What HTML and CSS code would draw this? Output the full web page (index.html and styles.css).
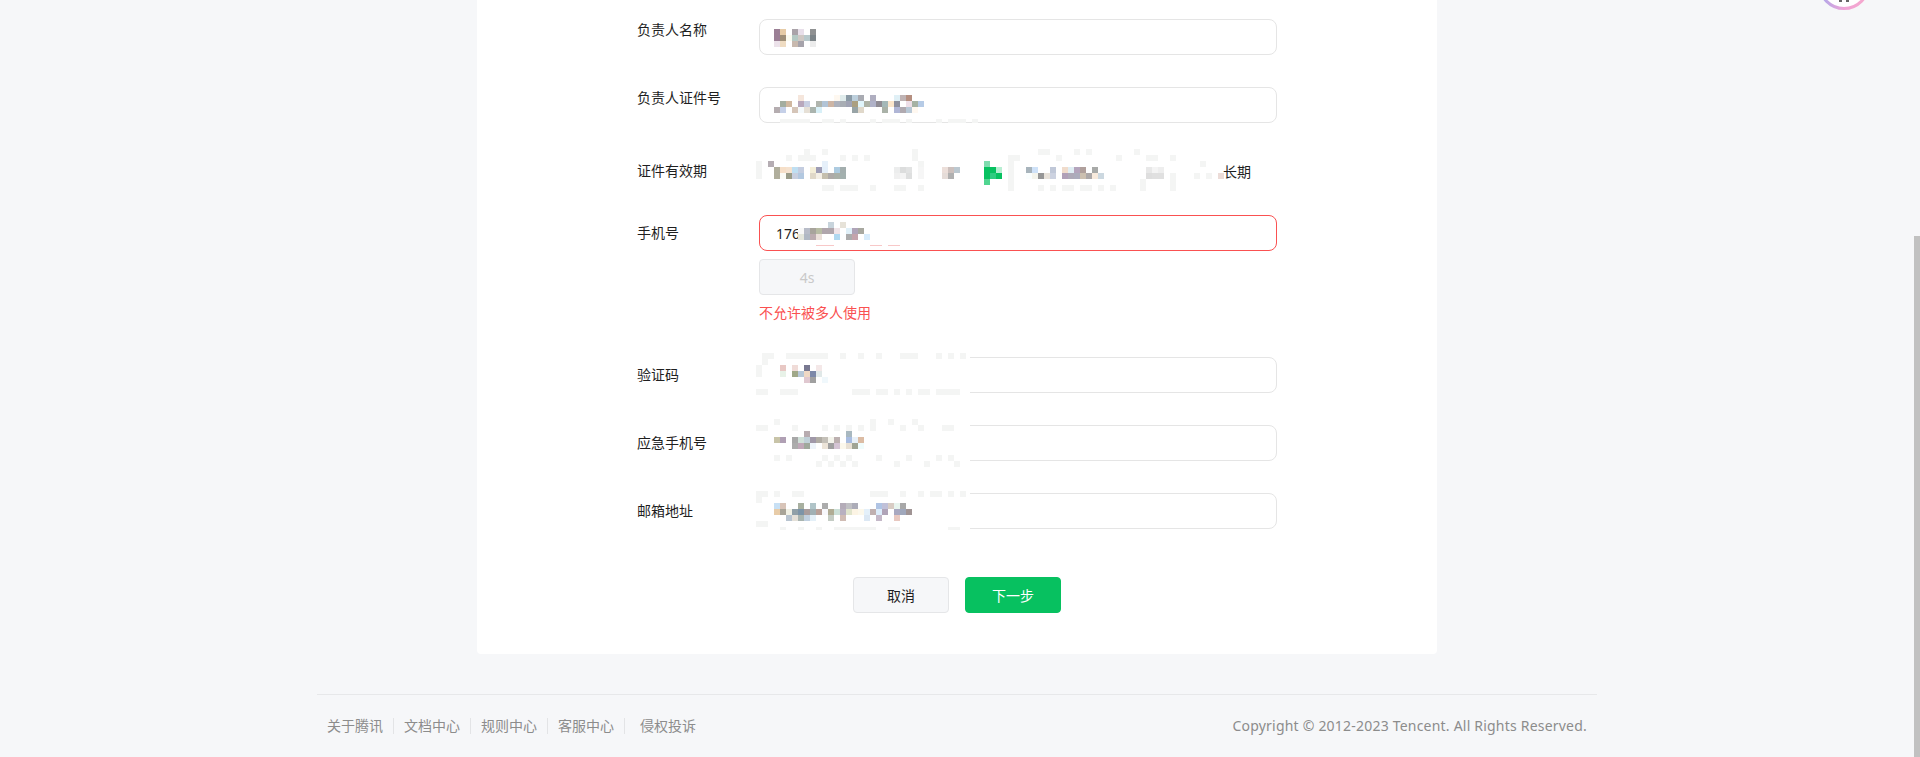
FILE: index.html
```html
<!DOCTYPE html>
<html lang="zh-CN">

<head>
    <meta charset="UTF-8">
    <title>负责人信息</title>
    <link rel="stylesheet" href="styles.css">
</head>

<body>
    <div class="page">
        <div class="card">
            <form class="form">
                <div class="row">
                    <label class="label label-top">负责人名称</label>
                    <div class="field"><input class="input" type="text" readonly></div>
                </div>
                <div class="row">
                    <label class="label label-top">负责人证件号</label>
                    <div class="field"><input class="input" type="text" readonly></div>
                </div>
                <div class="row row-date">
                    <label class="label label-date">证件有效期</label>
                    <div class="field date-value">长期</div>
                </div>
                <div class="row">
                    <label class="label">手机号</label>
                    <div class="field">
                        <input class="input input-error" type="text" value="176" readonly>
                        <button class="btn btn-code" type="button" disabled>4s</button>
                        <p class="error">不允许被多人使用</p>
                    </div>
                </div>
                <div class="row">
                    <label class="label">验证码</label>
                    <div class="field"><input class="input" type="text" readonly></div>
                </div>
                <div class="row">
                    <label class="label">应急手机号</label>
                    <div class="field"><input class="input" type="text" readonly></div>
                </div>
                <div class="row">
                    <label class="label">邮箱地址</label>
                    <div class="field"><input class="input" type="text" readonly></div>
                </div>
            </form>
            <div class="actions">
                <button class="btn" type="button">取消</button>
                <button class="btn btn-primary" type="button">下一步</button>
            </div>

            <!-- pixelated (redacted) values, one group per field, units are mosaic cells -->
            <svg class="mosaic" viewBox="477 0 960 654" aria-hidden="true">
                <path fill="#fff" d="M756 352h214v42H756zM756 420h214v45H756zM756 488h214v42H756z"/>

                <g transform="translate(774 29) scale(6)">
                    <rect x="0" y="0" fill="#9b7f95"/><rect x="1" y="0" fill="#e6cba6"/><rect x="3" y="0" fill="#aaa3a9"/><rect x="4" y="0" fill="#e8dfea"/><rect x="6" y="0" fill="#8f9192"/>
                    <rect x="0" y="1" fill="#9b7f95"/><rect x="1" y="1" fill="#9e8e77"/><rect x="2" y="1" fill="#fbfbef"/><rect x="3" y="1" fill="#b5c9c4"/><rect x="4" y="1" fill="#cfc8c4"/><rect x="5" y="1" fill="#b8c9cc"/><rect x="6" y="1" fill="#7c8488"/>
                    <rect x="0" y="2" fill="#ece2ea"/><rect x="1" y="2" fill="#efdcc2"/><rect x="3" y="2" fill="#c8b9ae"/><rect x="4" y="2" fill="#a6a3ab"/><rect x="6" y="2" fill="#ececec"/>
                </g>

                <g transform="translate(774 95) scale(6)">
                    <rect x="4" y="0" fill="#f5e6dc"/><rect x="10" y="0" fill="#fef8f0"/><rect x="11" y="0" fill="#e0ecec"/><rect x="12" y="0" fill="#8b9ba6"/><rect x="13" y="0" fill="#bccfdc"/><rect x="14" y="0" fill="#a9abb2"/><rect x="16" y="0" fill="#afaec0"/><rect x="20" y="0" fill="#e0f0f6"/><rect x="21" y="0" fill="#bfb3b4"/><rect x="22" y="0" fill="#b58f80"/>
                    <rect x="1" y="1" fill="#a3ada0"/><rect x="2" y="1" fill="#d0b8a0"/><rect x="4" y="1" fill="#b8a8bc"/><rect x="5" y="1" fill="#c8cfe2"/><rect x="7" y="1" fill="#b0b5ae"/><rect x="8" y="1" fill="#b2c4d6"/><rect x="9" y="1" fill="#cdb5a5"/><rect x="10" y="1" fill="#adb1bc"/><rect x="11" y="1" fill="#a8adb4"/><rect x="12" y="1" fill="#a0a3b4"/><rect x="13" y="1" fill="#ab9f80"/><rect x="14" y="1" fill="#e0f4fa"/><rect x="15" y="1" fill="#adb2a6"/><rect x="16" y="1" fill="#b0b2c8"/><rect x="17" y="1" fill="#908c94"/><rect x="18" y="1" fill="#a4b8b8"/><rect x="19" y="1" fill="#fbe6cc"/><rect x="20" y="1" fill="#8e909e"/><rect x="22" y="1" fill="#eedfe8"/><rect x="23" y="1" fill="#a6b2a4"/><rect x="24" y="1" fill="#b6cbe6"/>
                    <rect x="0" y="2" fill="#b5adb0"/><rect x="1" y="2" fill="#c5d0e8"/><rect x="3" y="2" fill="#d5c5b8"/><rect x="4" y="2" fill="#f5fafc"/><rect x="5" y="2" fill="#e6e0d6"/><rect x="6" y="2" fill="#aab4ae"/><rect x="7" y="2" fill="#d8f0f8"/><rect x="13" y="2" fill="#98a4a6"/><rect x="14" y="2" fill="#e0d8ca"/><rect x="18" y="2" fill="#aab2a8"/><rect x="20" y="2" fill="#b0b6d6"/><rect x="21" y="2" fill="#b0aab0"/><rect x="22" y="2" fill="#b8c8d6"/><rect x="23" y="2" fill="#fff8f0"/>
                </g>
                <path class="pale" d="M780 119h30v4h-30zM822 119h12v4h-12zM840 119h6v4h-6zM870 119h6v4h-6zM882 119h18v4h-18zM906 119h6v4h-6zM936 119h6v4h-6zM948 119h18v4h-18zM972 119h6v4h-6z"/>

                <g transform="translate(774 149) scale(6)">
                    <rect class="p" x="5" y="0"/><rect class="p" x="8" y="0"/><rect class="p" x="23" y="0"/><rect class="p" x="44" y="0"/><rect class="p" x="45" y="0"/><rect class="p" x="50" y="0"/><rect class="p" x="52" y="0"/><rect class="p" x="60" y="0"/>
                    <rect class="p" x="2" y="1"/><rect class="p" x="4" y="1"/><rect class="p" x="5" y="1"/><rect class="p" x="6" y="1"/><rect class="p" x="11" y="1"/><rect class="p" x="13" y="1"/><rect class="p" x="15" y="1"/><rect class="p" x="23" y="1"/><rect class="p" x="39" y="1"/><rect class="p" x="40" y="1"/><rect class="p" x="47" y="1"/><rect class="p" x="57" y="1"/><rect class="p" x="62" y="1"/><rect class="p" x="63" y="1"/><rect class="p" x="66" y="1"/>
                    <rect class="p" x="-3" y="2"/><rect x="-1" y="2" fill="#b5adb3"/><rect x="8" y="2" fill="#e6f0fa"/><rect class="p" x="24" y="2"/><rect x="35" y="2" fill="#7fdcae"/><rect class="p" x="39" y="2"/><rect class="p" x="71" y="2"/>
                    <rect class="p" x="-3" y="3"/><rect x="0" y="3" fill="#b0ae9c"/><rect x="1" y="3" fill="#f6dfc8"/><rect x="2" y="3" fill="#f5e2cf"/><rect x="3" y="3" fill="#bfdff2"/><rect x="4" y="3" fill="#c4cde0"/><rect x="6" y="3" fill="#f4eed8"/><rect x="7" y="3" fill="#9e9db5"/><rect x="8" y="3" fill="#e4effa"/><rect x="10" y="3" fill="#adcbe0"/><rect x="11" y="3" fill="#a3aeae"/><rect x="20" y="3" fill="#eceded"/><rect x="21" y="3" fill="#dcdddd"/><rect x="22" y="3" fill="#e2e3e3"/><rect x="24" y="3" fill="#f6f6f6"/><rect x="28" y="3" fill="#ecdfda"/><rect x="29" y="3" fill="#ccc0bd"/><rect x="30" y="3" fill="#bcc8d0"/><rect x="35" y="3" fill="#07c160"/><rect x="36" y="3" fill="#07c160"/><rect x="37" y="3" fill="#b8eed2"/><rect class="p" x="39" y="3"/><rect x="42" y="3" fill="#a8b4bc"/><rect x="43" y="3" fill="#cfe2f8"/><rect x="46" y="3" fill="#c0c8d8"/><rect x="48" y="3" fill="#f0dccc"/><rect x="49" y="3" fill="#e0eef4"/><rect x="50" y="3" fill="#b4a4bc"/><rect x="51" y="3" fill="#b0a09c"/><rect x="53" y="3" fill="#a8aaa8"/><rect x="62" y="3" fill="#e8e8e8"/><rect x="63" y="3" fill="#f4f4f4"/><rect x="64" y="3" fill="#eeeeee"/>
                    <rect class="p" x="-3" y="4"/><rect x="0" y="4" fill="#b0ae9c"/><rect x="1" y="4" fill="#fbfbf5"/><rect x="2" y="4" fill="#9a9c88"/><rect x="3" y="4" fill="#c8cfdf"/><rect x="4" y="4" fill="#b2c8e0"/><rect x="6" y="4" fill="#e0d8c8"/><rect x="7" y="4" fill="#f4efe6"/><rect x="8" y="4" fill="#c5bfae"/><rect x="9" y="4" fill="#aeaaa8"/><rect x="10" y="4" fill="#aab0a8"/><rect x="11" y="4" fill="#a3b0ae"/><rect x="20" y="4" fill="#f0f0f0"/><rect x="21" y="4" fill="#f4f4f4"/><rect x="22" y="4" fill="#dedfdf"/><rect x="24" y="4" fill="#f6f6f6"/><rect x="28" y="4" fill="#e5dcd8"/><rect x="29" y="4" fill="#b0b0b0"/><rect x="35" y="4" fill="#07c160"/><rect x="36" y="4" fill="#2fcc80"/><rect x="37" y="4" fill="#07c160"/><rect class="p" x="39" y="4"/><rect x="42" y="4" fill="#fafefe"/><rect x="43" y="4" fill="#f4f4ec"/><rect x="44" y="4" fill="#969696"/><rect x="45" y="4" fill="#e8e2da"/><rect x="46" y="4" fill="#ccd2e0"/><rect x="48" y="4" fill="#b0a0b8"/><rect x="49" y="4" fill="#aeaab8"/><rect x="50" y="4" fill="#acacbc"/><rect x="51" y="4" fill="#ccc0b0"/><rect x="52" y="4" fill="#aca8a8"/><rect x="53" y="4" fill="#f8eadc"/><rect x="54" y="4" fill="#ccd8e0"/><rect x="62" y="4" fill="#dedede"/><rect x="63" y="4" fill="#e0e0e0"/><rect x="64" y="4" fill="#e0e0e0"/><rect class="p" x="66" y="4"/><rect class="p" x="70" y="4"/><rect class="p" x="72" y="4"/><rect x="74" y="4" fill="#ecdcd8"/>
                    <rect x="35" y="5" fill="#50d590"/><rect class="p" x="39" y="5"/><rect class="p" x="61" y="5"/><rect class="p" x="66" y="5"/>
                    <rect class="p" x="8" y="6"/><rect class="p" x="9" y="6"/><rect class="p" x="11" y="6"/><rect class="p" x="12" y="6"/><rect class="p" x="13" y="6"/><rect class="p" x="16" y="6"/><rect class="p" x="20" y="6"/><rect class="p" x="21" y="6"/><rect class="p" x="24" y="6"/><rect class="p" x="39" y="6"/><rect class="p" x="44" y="6"/><rect class="p" x="46" y="6"/><rect class="p" x="48" y="6"/><rect class="p" x="49" y="6"/><rect class="p" x="51" y="6"/><rect class="p" x="52" y="6"/><rect class="p" x="54" y="6"/><rect class="p" x="56" y="6"/><rect class="p" x="61" y="6"/><rect class="p" x="66" y="6"/>
                </g>

                <g transform="translate(774 222) scale(6)">
                    <rect x="9" y="0" fill="#c8d4dc"/><rect x="11" y="0" fill="#e6e2d8"/>
                    <rect x="4" y="1" fill="#f8f8f8"/><rect x="5" y="1" fill="#b8bcc8"/><rect x="6" y="1" fill="#a8a49c"/><rect x="7" y="1" fill="#b8bca4"/><rect x="8" y="1" fill="#b0a6ac"/><rect x="9" y="1" fill="#b0a6ac"/><rect x="10" y="1" fill="#f0e4e8"/><rect x="12" y="1" fill="#e0f0f8"/><rect x="13" y="1" fill="#b0a4b8"/><rect x="14" y="1" fill="#a8a8a0"/>
                    <rect x="4" y="2" fill="#e4e6dc"/><rect x="5" y="2" fill="#b0b8c4"/><rect x="6" y="2" fill="#bcacb0"/><rect x="7" y="2" fill="#ece0da"/><rect x="10" y="2" fill="#b0d8f0"/><rect x="12" y="2" fill="#acacac"/><rect x="13" y="2" fill="#c4a4ac"/><rect x="15" y="2" fill="#d8ecfc"/>
                </g>
                <path fill="#f8c8c8" d="M816 245h18v1h-18zM870 245h12v1h-12zM888 245h12v1h-12z"/>

                <g transform="translate(774 353) scale(6)">
                    <rect class="p" x="-2" y="0"/><rect class="p" x="-1" y="0"/><rect class="p" x="2" y="0"/><rect class="p" x="3" y="0"/><rect class="p" x="4" y="0"/><rect class="p" x="5" y="0"/><rect class="p" x="6" y="0"/><rect class="p" x="7" y="0"/><rect class="p" x="8" y="0"/><rect class="p" x="11" y="0"/><rect class="p" x="14" y="0"/><rect class="p" x="17" y="0"/><rect class="p" x="21" y="0"/><rect class="p" x="22" y="0"/><rect class="p" x="23" y="0"/><rect class="p" x="27" y="0"/><rect class="p" x="29" y="0"/><rect class="p" x="31" y="0"/>
                    <rect class="p" x="-2" y="1"/>
                    <rect class="p" x="-3" y="2"/><rect x="1" y="2" fill="#e8c8c4"/><rect x="3" y="2" fill="#f0dcd8"/><rect x="5" y="2" fill="#787890"/><rect x="7" y="2" fill="#f4e8e8"/>
                    <rect class="p" x="-3" y="3"/><rect x="1" y="3" fill="#e8f2e8"/><rect x="3" y="3" fill="#a0a888"/><rect x="4" y="3" fill="#b8c8d8"/><rect x="5" y="3" fill="#f0d8c4"/><rect x="6" y="3" fill="#7c88a8"/><rect x="7" y="3" fill="#e0e8e8"/>
                    <rect x="5" y="4" fill="#e0c8d0"/><rect x="6" y="4" fill="#a0a0a0"/><rect x="8" y="4" fill="#f0f8fc"/>
                    <rect class="p" x="-3" y="6"/><rect class="p" x="-2" y="6"/><rect class="p" x="1" y="6"/><rect class="p" x="2" y="6"/><rect class="p" x="3" y="6"/><rect class="p" x="13" y="6"/><rect class="p" x="14" y="6"/><rect class="p" x="15" y="6"/><rect class="p" x="17" y="6"/><rect class="p" x="18" y="6"/><rect class="p" x="20" y="6"/><rect class="p" x="22" y="6"/><rect class="p" x="24" y="6"/><rect class="p" x="25" y="6"/><rect class="p" x="27" y="6"/><rect class="p" x="28" y="6"/><rect class="p" x="29" y="6"/><rect class="p" x="30" y="6"/>
                </g>

                <g transform="translate(774 419) scale(6)">
                    <rect class="p" x="0" y="0"/><rect class="p" x="16" y="0"/><rect class="p" x="19" y="0"/><rect class="p" x="23" y="0"/>
                    <rect class="p" x="-3" y="1"/><rect class="p" x="-2" y="1"/><rect class="p" x="3" y="1"/><rect class="p" x="8" y="1"/><rect class="p" x="10" y="1"/><rect class="p" x="12" y="1"/><rect class="p" x="14" y="1"/><rect class="p" x="16" y="1"/><rect class="p" x="21" y="1"/><rect class="p" x="24" y="1"/><rect class="p" x="28" y="1"/><rect class="p" x="29" y="1"/>
                    <rect x="5" y="2" fill="#b8acb0"/><rect x="12" y="2" fill="#a8b8c0"/>
                    <rect x="0" y="3" fill="#c8c4a8"/><rect x="1" y="3" fill="#b0a0b4"/><rect x="3" y="3" fill="#a8a8a8"/><rect x="4" y="3" fill="#d0e0d8"/><rect x="5" y="3" fill="#c0d0d8"/><rect x="6" y="3" fill="#a098a8"/><rect x="7" y="3" fill="#b0aca4"/><rect x="8" y="3" fill="#c4c0b8"/><rect x="9" y="3" fill="#f4f4ec"/><rect x="10" y="3" fill="#bcb0b0"/><rect x="12" y="3" fill="#a8bce0"/><rect x="13" y="3" fill="#e8f0f8"/><rect x="14" y="3" fill="#dcbca4"/>
                    <rect x="3" y="4" fill="#acacac"/><rect x="4" y="4" fill="#c0a8b8"/><rect x="5" y="4" fill="#a0a89c"/><rect x="6" y="4" fill="#eef4fa"/><rect x="8" y="4" fill="#ece4d8"/><rect x="9" y="4" fill="#a0a0a0"/><rect x="10" y="4" fill="#d4c4d4"/><rect x="11" y="4" fill="#fcf8ec"/><rect x="12" y="4" fill="#e8e0d4"/><rect x="13" y="4" fill="#a0a494"/><rect x="14" y="4" fill="#f0fcfc"/>
                    <rect class="p" x="0" y="6"/><rect class="p" x="2" y="6"/><rect class="p" x="8" y="6"/><rect class="p" x="10" y="6"/><rect class="p" x="12" y="6"/><rect class="p" x="17" y="6"/><rect class="p" x="22" y="6"/><rect class="p" x="27" y="6"/><rect class="p" x="29" y="6"/>
                    <rect class="p" x="7" y="7"/><rect class="p" x="9" y="7"/><rect class="p" x="11" y="7"/><rect class="p" x="13" y="7"/><rect class="p" x="20" y="7"/><rect class="p" x="25" y="7"/><rect class="p" x="30" y="7"/>
                </g>

                <g transform="translate(774 491) scale(6)">
                    <rect class="p" x="-3" y="0"/><rect class="p" x="-2" y="0"/><rect class="p" x="0" y="0"/><rect class="p" x="3" y="0"/><rect class="p" x="4" y="0"/><rect class="p" x="16" y="0"/><rect class="p" x="17" y="0"/><rect class="p" x="18" y="0"/><rect class="p" x="21" y="0"/><rect class="p" x="24" y="0"/><rect class="p" x="26" y="0"/><rect class="p" x="27" y="0"/><rect class="p" x="29" y="0"/><rect class="p" x="31" y="0"/>
                    <rect class="p" x="-3" y="1"/>
                    <rect x="0" y="2" fill="#c8e0f4"/><rect x="1" y="2" fill="#d8c4b8"/><rect x="4" y="2" fill="#a8b0a0"/><rect x="6" y="2" fill="#b0c4c8"/><rect x="8" y="2" fill="#acacac"/><rect x="11" y="2" fill="#b4acb8"/><rect x="12" y="2" fill="#c0c0c4"/><rect x="13" y="2" fill="#acacb8"/><rect x="17" y="2" fill="#b0c4e4"/><rect x="18" y="2" fill="#c0c0d8"/><rect x="19" y="2" fill="#d8ccc4"/><rect x="20" y="2" fill="#e8f4ee"/><rect x="21" y="2" fill="#a8a8a8"/>
                    <rect x="0" y="3" fill="#e8cca8"/><rect x="1" y="3" fill="#a8a498"/><rect x="2" y="3" fill="#f0f0e4"/><rect x="3" y="3" fill="#90a0a8"/><rect x="4" y="3" fill="#7c94a8"/><rect x="5" y="3" fill="#a89c9c"/><rect x="6" y="3" fill="#a0b0b4"/><rect x="7" y="3" fill="#b8a098"/><rect x="8" y="3" fill="#f8f8fc"/><rect x="9" y="3" fill="#b0ac94"/><rect x="10" y="3" fill="#cce0d8"/><rect x="11" y="3" fill="#b8b0c0"/><rect x="12" y="3" fill="#e0e4cc"/><rect x="13" y="3" fill="#fcf4e4"/><rect x="14" y="3" fill="#fcf8ec"/><rect x="15" y="3" fill="#e4f0fa"/><rect x="16" y="3" fill="#c0b0b0"/><rect x="17" y="3" fill="#dcecfa"/><rect x="18" y="3" fill="#b0a4b8"/><rect x="20" y="3" fill="#a8a8c0"/><rect x="21" y="3" fill="#a0a8bc"/><rect x="22" y="3" fill="#a09494"/>
                    <rect x="2" y="4" fill="#b8c4d0"/><rect x="3" y="4" fill="#e4e0d8"/><rect x="4" y="4" fill="#a8b4b0"/><rect x="5" y="4" fill="#c0d0e0"/><rect x="6" y="4" fill="#e4f0f8"/><rect x="9" y="4" fill="#c4ccc4"/><rect x="11" y="4" fill="#d0bcb4"/><rect x="15" y="4" fill="#dce8f4"/><rect x="17" y="4" fill="#c4b8c8"/><rect x="20" y="4" fill="#e8c8c0"/>
                    <rect class="p" x="-3" y="5"/><rect class="p" x="-2" y="5"/>
                </g>
                <path class="pale" d="M780 527h6v3h-6zM798 527h6v3h-6zM816 527h6v3h-6zM834 527h42v3h-42zM888 527h12v3h-12zM948 527h12v3h-12z"/>
            </svg>
        </div>

        <div class="footer">
            <ul class="links">
                <li>关于腾讯</li>
                <li>文档中心</li>
                <li>规则中心</li>
                <li>客服中心</li>
                <li>侵权投诉</li>
            </ul>
            <span class="copyright">Copyright © 2012-2023 Tencent. All Rights Reserved.</span>
        </div>
    </div>

    <div class="scrollbar">
        <div class="thumb"></div>
    </div>

    <svg class="avatar" width="60" height="12" viewBox="0 0 60 12" aria-hidden="true">
        <defs>
            <linearGradient id="ring" x1="0" x2="1" y1="0" y2="0">
                <stop offset="0" stop-color="#a9a8ec"/>
                <stop offset=".5" stop-color="#f0a4d6"/>
                <stop offset="1" stop-color="#f5a8cc"/>
            </linearGradient>
        </defs>
        <circle cx="30" cy="-16" r="24.5" fill="#fff" stroke="url(#ring)" stroke-width="3"/>
        <path fill="#666" d="M25 0h3v2h-3zM32 0h3v2h-3z"/>
    </svg>
</body>

</html>
```

FILE: styles.css
```css
* {
    padding: 0;
    margin: 0;
    list-style: none;
    box-sizing: border-box;
}

html,
body {
    height: 100%;
    overflow: hidden;
}

body {
    display: flex;
    position: relative;
    background: #f6f7f9;
    color: #1f1f1f;
    font-family: "Noto Sans", "Noto Sans CJK SC", sans-serif;
    font-size: 14px;
}

.page {
    flex: 1;
    min-width: 0;
}

.card {
    position: relative;
    width: 960px;
    height: 654px;
    margin: 0 auto;
    padding-top: 19px;
    background: #fff;
    border-radius: 0 0 4px 4px;
}

.form {
    padding-left: 160px;
}

.row {
    display: flex;
    margin-bottom: 32px;
}

.row-date {
    height: 28px;
}

.label {
    width: 122px;
    padding-top: 7px;
    line-height: 22px;
}

.label-top {
    padding-top: 0;
}

.label-date {
    padding-top: 5px;
}

.field {
    width: 518px;
}

.date-value {
    padding: 6px 26px 0 0;
    line-height: 22px;
    text-align: right;
}

.input {
    display: block;
    width: 100%;
    height: 36px;
    padding: 0 16px;
    border: 1px solid #e5e5e5;
    border-radius: 8px;
    outline: none;
    background: #fff;
    color: #1f1f1f;
    font: inherit;
}

.input-error {
    border-color: #fa5151;
}

.error {
    margin-top: 7px;
    padding-bottom: 1px;
    color: #fa5151;
    line-height: 22px;
}

.btn {
    display: block;
    width: 96px;
    height: 36px;
    border: 1px solid #e5e6e8;
    border-radius: 4px;
    background: #f6f7f9;
    color: #1f1f1f;
    font: inherit;
}

.btn-code {
    margin-top: 8px;
    color: #c9c9c9;
}

.btn-primary {
    border-color: #07c160;
    background: #07c160;
    color: #fff;
}

.actions {
    display: flex;
    justify-content: center;
    gap: 16px;
    margin-top: 48px;
}

.mosaic {
    position: absolute;
    left: 0;
    top: 0;
    width: 960px;
    height: 654px;
    shape-rendering: crispEdges;
    pointer-events: none;
}

.mosaic rect {
    width: 1px;
    height: 1px;
}

.mosaic .p,
.mosaic .pale {
    fill: #f4f5f4;
}

.footer {
    display: flex;
    justify-content: space-between;
    align-items: center;
    width: 1280px;
    height: 63px;
    margin: 40px auto 0;
    padding: 0 10px;
    border-top: 1px solid #e7e8ea;
    color: #8c8c8c;
}

.links {
    display: flex;
}

.links li {
    padding-right: 10px;
    margin-right: 10px;
    border-right: 1px solid #e3e4e6;
    line-height: 16px;
}

.links li:last-child {
    padding-right: 0;
    margin: 0 0 0 5px;
    border-right: 0;
}

.copyright {
    padding-bottom: 2px;
    letter-spacing: .21px;
}

.scrollbar {
    flex: none;
    width: 6px;
    padding-top: 236px;
}

.thumb {
    height: 100%;
    background: #c1c1c1;
}

.avatar {
    position: absolute;
    left: 1814px;
    top: 0;
}
```
